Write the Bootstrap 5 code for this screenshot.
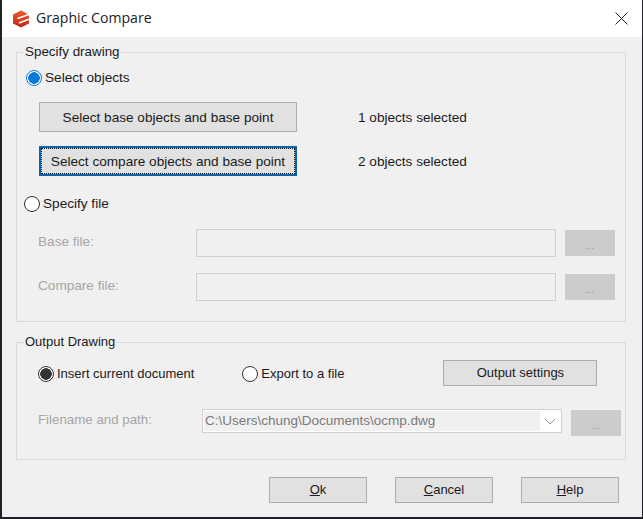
<!DOCTYPE html>
<html lang="en">
<head>
<meta charset="utf-8">
<title>Graphic Compare</title>
<link href="https://cdn.jsdelivr.net/npm/bootstrap@5.3.0/dist/css/bootstrap.min.css" rel="stylesheet">
<style>
html,body{height:519px;overflow:hidden;background:#1f2126;}
body{font-family:"Liberation Sans",Arial,sans-serif;font-size:13px;color:#1a1a1a;line-height:16px;}
.dlg{width:640px;height:517px;margin-left:2px;background:#f0f0f0;}
.tbar{height:37px;background:#fff;padding-left:10px;}
.ttl{font-family:"Open Sans",sans-serif;font-size:14.1px;color:#222;margin-left:6px;margin-top:-1px;}
.xbtn{margin-right:14px;margin-top:0;}
.grp{border:1px solid #d9d9d9;margin:0;min-width:0;}
.grp>legend{float:none;width:auto;font-size:13px;line-height:16px;margin:0 0 0 7px;padding:0 1px;color:#1a1a1a;}
.g1{margin:7px 0 0 14px;width:610px;height:278px;padding:0;font-size:13.6px;}
.g1>legend{font-size:13.4px;}
.g2{margin:12px 0 0 14px;width:610px;height:126px;padding:0;}
.rad{width:16px;height:16px;border-radius:50%;border:1px solid #333;background:#fff;flex:none;margin-right:3px;}
.rad.on-b{border-color:#0a78d7;background:radial-gradient(circle,#0a78d7 0 5.5px,#fff 6px);}
.rad.on-d{border-color:#333;background:radial-gradient(circle,#333 0 5.5px,#fff 6px);}
.rw{display:flex;align-items:center;}
.wbtn{background:#e1e1e1;border:1px solid #adadad;border-radius:0;color:#1a1a1a;font-size:13px;line-height:16px;padding:0;display:flex;align-items:center;justify-content:center;}
.wbtn:hover{background:#e1e1e1;}
.b-sel{width:258px;height:30px;font-size:13.6px;padding-top:1px;}
.b-foc{border:2px solid #0a64ad;outline:1px dotted #111;outline-offset:-3px;}
.b-gr{width:50px;height:26px;background:#ccc;border-color:#ccc;color:#9a9a9a;font-size:11px;padding-top:3px;}
.dim{color:#a6a6a6;}
.fld{border:1px solid #d0d0d0;background:#f0f0f0;height:28px;}
.r1{margin:10px 0 0 9px;}
.r2{margin:16px 0 0 22px;}
.r3{margin:14px 0 0 22px;}
.r4{margin:20px 0 0 7px;}
.r5{margin:17px 0 0 21px;}
.r6{margin:16px 0 0 21px;}
.lab{width:158px;margin-top:-2px;}
.note{margin-left:61px;padding-top:1px;}
.f-w{width:360px;}
.gap-b{margin-left:9px;}
.r7{margin:11px 0 0 21px;height:26px;}
.e-r{margin-left:48px;}
.b-out{width:154px;height:26px;margin-left:99px;margin-top:-2px;}
.r8{margin:22px 0 0 21px;align-items:flex-start;}
.r8 .b-gr{margin-top:1px;}
.lab2{width:164px;margin-top:3px;font-size:13.3px;}
.combo{width:360px;height:24px;background:#fff;border:1px solid #d0d0d0;padding:1px;color:#7a7a7a;font-size:13.5px;}
.combo-t{width:336px;background:#f0f0f0;height:20px;padding-left:1px;line-height:20px;}
.foot{margin:17px 0 0 267px;gap:28px;}
.b-ft{width:98px;height:26px;}
</style>
</head>
<body>
<div class="dlg">
  <div class="tbar d-flex align-items-center">
    <svg width="18" height="18" viewBox="0 0 18 18" aria-hidden="true"><defs><linearGradient id="lg" x1="0" y1="0" x2="0" y2="1"><stop offset="0" stop-color="#ee5a2c"/><stop offset="1" stop-color="#bb2a1c"/></linearGradient></defs><path d="M9 .5 17 4.5V13.5L9 17.5 1 13.5V4.5Z" fill="url(#lg)"/><path d="M5.5 8.5 17.5 4.2M7 13 17.5 9" stroke="#fff" stroke-width="1.7" fill="none"/></svg>
    <div class="ttl flex-grow-1">Graphic Compare</div>
    <svg class="xbtn" width="13" height="13" viewBox="0 0 13 13" aria-hidden="true"><path d="M.5.5l12 12M12.5.5l-12 12" stroke="#222" fill="none"/></svg>
  </div>
  <fieldset class="grp g1">
    <legend>Specify drawing</legend>
    <div class="rw r1"><span class="rad on-b"></span>Select objects</div>
    <div class="rw r2"><button type="button" class="btn wbtn b-sel">Select base objects and base point</button><span class="note">1 objects selected</span></div>
    <div class="rw r3"><button type="button" class="btn wbtn b-sel b-foc">Select compare objects and base point</button><span class="note">2 objects selected</span></div>
    <div class="rw r4"><span class="rad"></span>Specify file</div>
    <div class="rw r5"><span class="lab dim">Base file:</span><div class="fld f-w"></div><button type="button" class="btn wbtn b-gr gap-b">...</button></div>
    <div class="rw r6"><span class="lab dim">Compare file:</span><div class="fld f-w"></div><button type="button" class="btn wbtn b-gr gap-b">...</button></div>
  </fieldset>
  <fieldset class="grp g2">
    <legend>Output Drawing</legend>
    <div class="rw r7"><span class="rad on-d"></span><span>Insert current document</span><span class="rad e-r"></span><span>Export to a file</span><button type="button" class="btn wbtn b-out">Output settings</button></div>
    <div class="rw r8"><span class="lab2 dim">Filename and path:</span><div class="combo d-flex align-items-center"><div class="combo-t">C:\Users\chung\Documents\ocmp.dwg</div><svg class="ms-auto me-1" width="12" height="7" viewBox="0 0 12 7" aria-hidden="true"><path d="M1 1l5 5 5-5" stroke="#999" fill="none"/></svg></div><button type="button" class="btn wbtn b-gr gap-b">...</button></div>
  </fieldset>
  <div class="d-flex foot">
    <button type="button" class="btn wbtn b-ft"><span><u>O</u>k</span></button>
    <button type="button" class="btn wbtn b-ft"><span><u>C</u>ancel</span></button>
    <button type="button" class="btn wbtn b-ft"><span><u>H</u>elp</span></button>
  </div>
</div>
</body>
</html>
